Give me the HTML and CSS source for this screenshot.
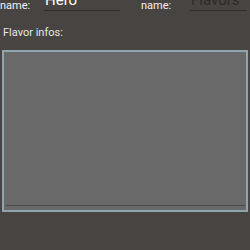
FILE: index.html
```html
<!DOCTYPE html>
<html>
<head>
<meta charset="utf-8">
<link rel="stylesheet" href="styles.css">
</head>
<body>
<div class="top">
  <div class="field">
    <span class="label">name:</span>
    <div class="input"><span class="value">Hero</span></div>
  </div>
  <div class="field second">
    <span class="label">name:</span>
    <div class="input narrow"><span class="placeholder">Flavors</span></div>
  </div>
</div>
<div class="infos-label">Flavor infos:</div>
<div class="textarea">
  <div class="textarea-line"></div>
</div>
</body>
</html>
```
FILE: styles.css
```css
html, body {
  margin: 0;
  padding: 0;
  background: #484442;
  width: 250px;
  height: 250px;
  overflow: hidden;
  font-family: Roboto, "Liberation Sans", sans-serif;
}
.top {
  display: flex;
  margin-top: -8px;
  height: 19px;
}
.field {
  display: flex;
  align-items: flex-end;
}
.second {
  margin-left: 21px;
}
.label {
  color: #f2f2f2;
  font-size: 11px;
  line-height: 13px;
  margin-bottom: -1px;
  width: 44px;
}
.second .label {
  width: 49px;
}
.input {
  width: 76px;
  border-bottom: 1px solid #2f2c2b;
  height: 19px;
  display: flex;
  align-items: flex-end;
}
.input.narrow {
  width: 57px;
}
.value {
  color: #ffffff;
  font-size: 15px;
  line-height: 17px;
  padding-left: 1px;
  margin-bottom: 1px;
}
.placeholder {
  color: #2e2b2a;
  font-size: 15px;
  line-height: 17px;
  padding-left: 1px;
  margin-bottom: 1px;
}
.infos-label {
  color: #e6e6e6;
  font-size: 11px;
  line-height: 13px;
  margin: 15px 0 0 3px;
}
.textarea {
  box-sizing: border-box;
  margin: 11px 2px 0 2px;
  height: 162px;
  background: #696969;
  border: 2px solid #8ea5ad;
  display: flex;
  flex-direction: column;
  justify-content: flex-end;
  padding: 0 1px 4px 2px;
}
.textarea-line {
  height: 1px;
  background: #4a4a4a;
}
```
